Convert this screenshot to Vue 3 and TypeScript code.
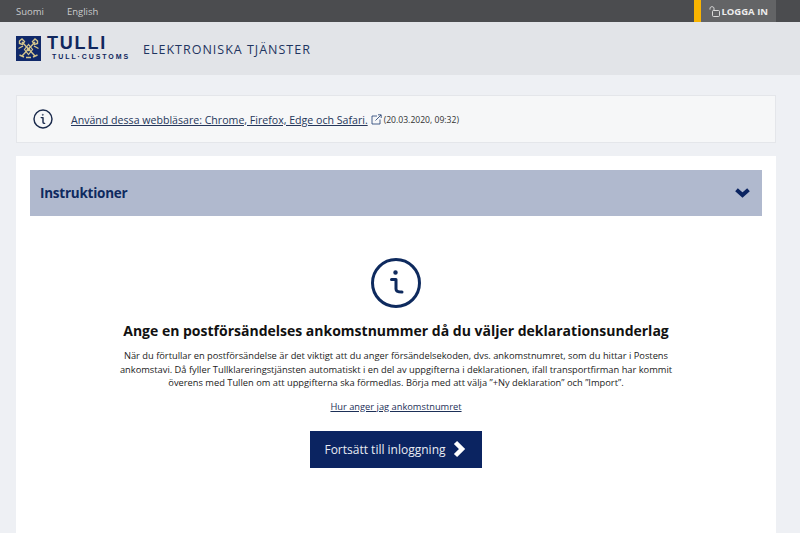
<script setup lang="ts">
const languages: string[] = ['Suomi', 'English']
</script>

<template>
  <div class="page">
    <div class="topbar">
      <div class="langs">
        <a v-for="lang in languages" :key="lang" class="lang">{{ lang }}</a>
      </div>
      <button class="login">
        <svg class="lock" width="11" height="11" viewBox="0 0 11 11" fill="none" stroke="#e8e8e8" stroke-width="0.9">
          <rect x="3.5" y="4.5" width="7" height="6" rx="1" />
          <path d="M5 4.5V2.6C5 1.4 4.2 0.7 3 0.7S1 1.4 1 2.6V3.6" />
        </svg>
        LOGGA IN
      </button>
    </div>

    <header class="header">
      <div class="logo">
        <svg class="crest" width="25" height="25" viewBox="0 0 25 25">
          <rect width="25" height="25" fill="#10296a" />
          <g fill="none" stroke="#d6c78c" stroke-width="1.4">
            <path d="M6 6L19 20" />
            <path d="M19 6L6 20" />
            <path d="M3.500 5L6 3L8.500 5.500L6.500 8.500L3.500 7.500Z" />
            <path d="M21.500 5L19 3L16.500 5.500L18.500 8.500L21.500 7.500Z" />
            <path d="M12.500 8.500L8.500 13.500L12.500 18.500L16.500 13.500Z" stroke-width="1.200" />
            <path d="M2.500 12.500L7 10M22.500 12.500L18 10M3.500 19L8 21M21.500 19L17 21M10 21.500H15" />
          </g>
          <circle cx="12.500" cy="13.500" r="1.800" fill="#d6c78c" />
        </svg>
        <div class="wordmark">
          <span class="tulli">TULLI</span>
          <span class="customs">TULL·CUSTOMS</span>
        </div>
      </div>
      <span class="service">ELEKTRONISKA TJÄNSTER</span>
    </header>

    <main class="content">
      <section class="notice">
        <svg class="notice-icon" width="20" height="20" viewBox="0 0 50 50" fill="none" stroke="#1a2a4c" stroke-width="3.600">
          <circle cx="25" cy="25" r="22.500" />
          <path d="M20.500 21.500H25V33C25 35 26.500 36 29 36" stroke-linecap="round" stroke-linejoin="round" />
          <circle cx="24.500" cy="14.500" r="1.600" fill="#1a2a4c" stroke-width="1" />
        </svg>
        <a class="notice-link">Använd dessa webbläsare: Chrome, Firefox, Edge och Safari.</a>
        <svg class="external" width="11" height="11" viewBox="0 0 11 11" fill="none" stroke="#1c3a6e" stroke-width="0.8">
          <path d="M6 2H1V10H9V5.500" />
          <path d="M4.500 6.500L10 1M7 0.800H10.200V4" />
        </svg>
        <span class="stamp">(20.03.2020, 09:32)</span>
      </section>

      <section class="card">
        <div class="accordion">
          <h2 class="accordion-title">Instruktioner</h2>
          <svg class="chevron" width="15" height="10" viewBox="0 0 15 10" fill="none" stroke="#0b2461" stroke-width="4">
            <path d="M1.500 1.800L7.500 7L13.500 1.800" />
          </svg>
        </div>

        <div class="instructions">
          <svg class="big-icon" width="50" height="50" viewBox="0 0 50 50" fill="none" stroke="#0e2a5e" stroke-width="3">
            <circle cx="25" cy="25" r="23.500" />
            <path d="M20.500 21.500H25V31C25 33 26.500 34 31 34" stroke-linecap="round" stroke-linejoin="round" />
            <circle cx="24.500" cy="14.500" r="1.500" fill="#0e2a5e" stroke-width="1.500" />
          </svg>
          <h1 class="title">Ange en postförsändelses ankomstnummer då du väljer deklarationsunderlag</h1>
          <p class="body-text">
            När du förtullar en postförsändelse är det viktigt att du anger försändelsekoden, dvs. ankomstnumret, som du hittar i Postens<br />
            ankomstavi. Då fyller Tullklareringstjänsten automatiskt i en del av uppgifterna i deklarationen, ifall transportfirman har kommit<br />
            överens med Tullen om att uppgifterna ska förmedlas. Börja med att välja ”+Ny deklaration” och ”Import”.
          </p>
          <a class="how-link">Hur anger jag ankomstnumret</a>
          <button class="continue">
            Fortsätt till inloggning
            <svg width="13" height="18" viewBox="0 0 13 18" fill="none" stroke="#fff" stroke-width="4.500">
              <path d="M2.500 2.500L9 9L2.500 15.500" />
            </svg>
          </button>
        </div>
      </section>
    </main>
  </div>
</template>

<style>
html,
body {
  margin: 0;
  height: 533px;
  overflow: hidden;
  background: #eef0f4;
}
</style>

<style scoped>
.page {
  height: 533px;
  overflow: hidden;
  font-family: "Open Sans", "Noto Sans", sans-serif;
  color: #1a1a1a;
}

.topbar {
  display: flex;
  justify-content: space-between;
  height: 22px;
  padding: 0 24px 0 16px;
  background: #4b4c4f;
}

.langs {
  display: flex;
  gap: 23px;
  align-items: center;
}

.lang {
  font-size: 9.500px;
  color: #c9cacc;
}

.login {
  display: flex;
  align-items: center;
  gap: 1px;
  height: 22px;
  padding: 0 8px 0 8px;
  border: none;
  border-left: 7px solid #f9b400;
  background: #636466;
  color: #ececec;
  font-family: inherit;
  font-size: 9.500px;
  font-weight: 700;
}

.header {
  display: flex;
  align-items: center;
  height: 53px;
  padding-left: 16px;
  background: #e2e4e8;
}

.logo {
  display: flex;
  align-items: center;
  gap: 6px;
}

.wordmark {
  display: flex;
  flex-direction: column;
  align-items: flex-end;
  width: 83px;
  color: #10275e;
  font-family: "Liberation Sans", sans-serif;
  font-weight: 700;
}

.tulli {
  align-self: flex-start;
  height: 14px;
  font-size: 18px;
  line-height: 14px;
  letter-spacing: 1.800px;
}

.customs {
  margin-top: 2px;
  font-size: 7px;
  line-height: 9px;
  letter-spacing: 1.900px;
}

.service {
  margin-left: 13px;
  font-size: 12.500px;
  letter-spacing: 1px;
  color: #1f3560;
  transform: translateY(1px);
}

.content {
  padding: 20px 24px 0 16px;
}

.notice {
  display: flex;
  align-items: center;
  height: 46px;
  padding-left: 16px;
  border: 1px solid #e4e6ea;
  background: #f6f7f8;
}

.notice-link {
  margin-left: 18px;
  padding-top: 1px;
  font-size: 10.600px;
  color: #25365a;
  text-decoration: underline;
}

.external {
  margin-left: 3px;
}

.stamp {
  margin-left: 2px;
  padding-top: 1px;
  font-size: 8.600px;
  color: #333;
}

.card {
  height: 377px;
  margin-top: 13px;
  padding: 14px 14px 0;
  background: #fff;
}

.accordion {
  display: flex;
  align-items: center;
  justify-content: space-between;
  height: 46px;
  padding: 0 12px 0 10px;
  background: #b0b9ce;
}

.accordion-title {
  margin: 0;
  font-size: 13.500px;
  font-weight: 700;
  letter-spacing: -0.250px;
  color: #0f2a5f;
}

.instructions {
  display: flex;
  flex-direction: column;
  align-items: center;
  padding-top: 42px;
}

.title {
  margin: 13px 0 0;
  font-size: 14px;
  line-height: 20px;
  font-weight: 700;
  color: #111;
}

.body-text {
  margin: 8px 0 0;
  font-size: 9.300px;
  line-height: 13.600px;
  text-align: center;
  color: #222;
}

.how-link {
  margin-top: 10px;
  font-size: 9.300px;
  color: #1d3058;
  text-decoration: underline;
}

.continue {
  display: flex;
  align-items: center;
  gap: 7px;
  height: 37px;
  margin-top: 18px;
  padding: 0 16px 0 14px;
  border: none;
  background: #0b2461;
  color: #e9ecf3;
  font-family: inherit;
  font-size: 12px;
}
</style>
